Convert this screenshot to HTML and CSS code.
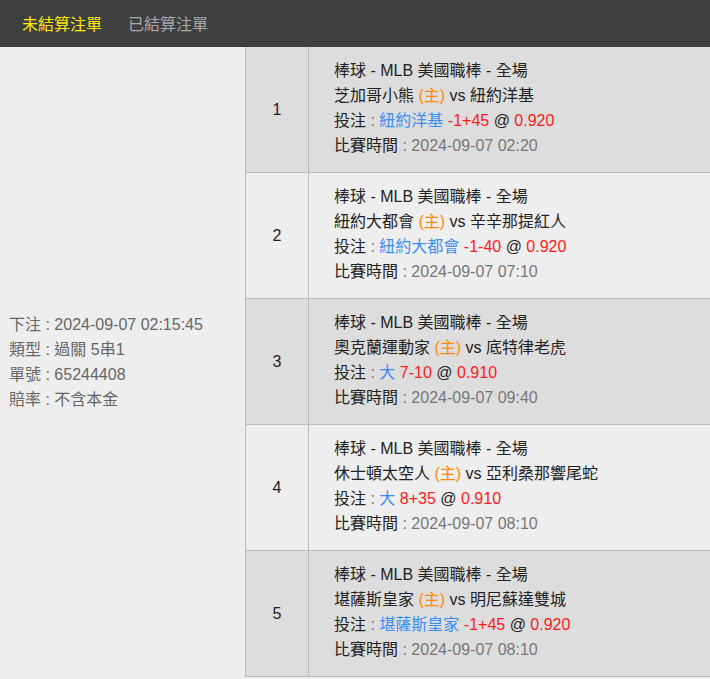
FILE: index.html
```html
<!doctype html>
<html>
    <head>
        <meta charset="utf-8">
        <link rel="stylesheet" href="styles.css">
    </head>
    <body>
    <div class="tabs">
        <div class="tab active">未結算注單</div>
        <div class="tab">已結算注單</div>
    </div>

    <div class="slip">
        <div class="slip-info">
            <div>下注 : 2024-09-07 02:15:45</div>
            <div>類型 : 過關 5串1</div>
            <div>單號 : 65244408</div>
            <div>賠率 : 不含本金</div>
        </div>
        <div class="legs">
            <div class="leg odd">
                <div class="leg-no">1</div>
                <div class="leg-body">
                    <div>棒球 - MLB 美國職棒 - 全場</div>
                    <div>芝加哥小熊 <span class="home">(主)</span> vs 紐約洋基</div>
                    <div>投注 <span class="muted">:</span> <span class="pick">紐約洋基</span> <span class="odds">-1+45</span> @ <span class="odds">0.920</span></div>
                    <div>比賽時間 <span class="muted">: 2024-09-07 02:20</span></div>
                </div>
            </div>
            <div class="leg">
                <div class="leg-no">2</div>
                <div class="leg-body">
                    <div>棒球 - MLB 美國職棒 - 全場</div>
                    <div>紐約大都會 <span class="home">(主)</span> vs 辛辛那提紅人</div>
                    <div>投注 <span class="muted">:</span> <span class="pick">紐約大都會</span> <span class="odds">-1-40</span> @ <span class="odds">0.920</span></div>
                    <div>比賽時間 <span class="muted">: 2024-09-07 07:10</span></div>
                </div>
            </div>
            <div class="leg odd">
                <div class="leg-no">3</div>
                <div class="leg-body">
                    <div>棒球 - MLB 美國職棒 - 全場</div>
                    <div>奧克蘭運動家 <span class="home">(主)</span> vs 底特律老虎</div>
                    <div>投注 <span class="muted">:</span> <span class="pick">大</span> <span class="odds">7-10</span> @ <span class="odds">0.910</span></div>
                    <div>比賽時間 <span class="muted">: 2024-09-07 09:40</span></div>
                </div>
            </div>
            <div class="leg">
                <div class="leg-no">4</div>
                <div class="leg-body">
                    <div>棒球 - MLB 美國職棒 - 全場</div>
                    <div>休士頓太空人 <span class="home">(主)</span> vs 亞利桑那響尾蛇</div>
                    <div>投注 <span class="muted">:</span> <span class="pick">大</span> <span class="odds">8+35</span> @ <span class="odds">0.910</span></div>
                    <div>比賽時間 <span class="muted">: 2024-09-07 08:10</span></div>
                </div>
            </div>
            <div class="leg odd">
                <div class="leg-no">5</div>
                <div class="leg-body">
                    <div>棒球 - MLB 美國職棒 - 全場</div>
                    <div>堪薩斯皇家 <span class="home">(主)</span> vs 明尼蘇達雙城</div>
                    <div>投注 <span class="muted">:</span> <span class="pick">堪薩斯皇家</span> <span class="odds">-1+45</span> @ <span class="odds">0.920</span></div>
                    <div>比賽時間 <span class="muted">: 2024-09-07 08:10</span></div>
                </div>
            </div>
        </div>
    </div>
    </body>
</html>
```

FILE: styles.css
```css
body {
    margin: 0;
    font-family: "Liberation Sans", "Noto Sans CJK TC", sans-serif;
    background-color: #eeeeee;
    color: #222;
}
* {
    box-sizing: border-box;
}

.tabs {
    display: flex;
    height: 47px;
    align-items: center;
    padding-left: 9px;
    padding-bottom: 1px;
    background-color: #3f3f3f;
    font-size: 16px;
}

.tab {
    padding: 0 13px;
    color: #aaaaaa;
    cursor: default;
}

.tab.active {
    color: #ffea00;
}

.slip {
    display: flex;
    font-size: 16px;
}

.slip-info {
    width: 246px;
    flex-shrink: 0;
    display: flex;
    flex-direction: column;
    justify-content: center;
    padding-left: 9px;
    line-height: 25px;
    color: #666;
    border-right: 1px solid #bbb;
}

.legs {
    flex: 1;
}

.leg {
    display: flex;
    background-color: #eeeeee;
    border-bottom: 1px solid #bbb;
}

.leg.odd {
    background-color: #dddddd;
}

.leg-no {
    width: 63px;
    flex-shrink: 0;
    display: flex;
    align-items: center;
    justify-content: center;
    border-right: 1px solid #bbb;
}

.leg-body {
    padding: 11px 0 14px 25px;
    line-height: 25px;
}

.home {
    color: #ff8a00;
}

.muted {
    color: #777;
}

.pick {
    color: #3b8ef3;
}

.odds {
    color: #ff1a1a;
}
```
